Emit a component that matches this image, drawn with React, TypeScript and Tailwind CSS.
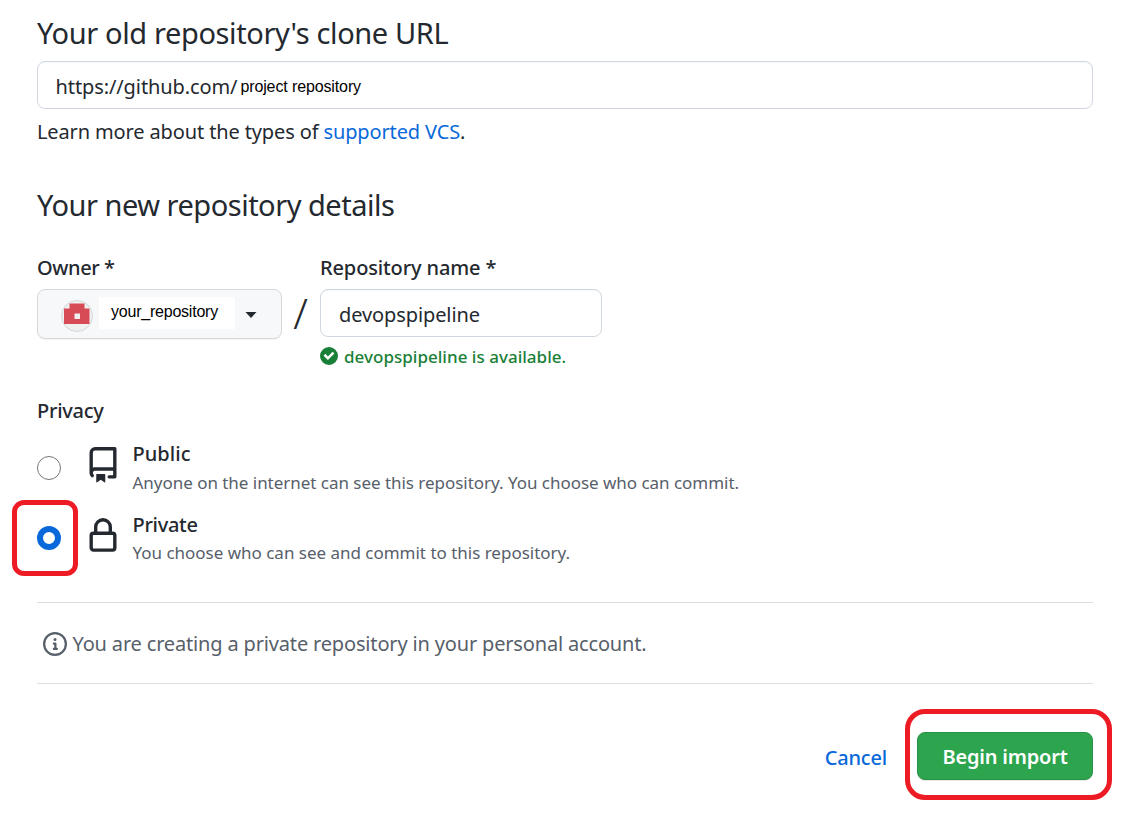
import type { ReactNode } from "react";

function RepoIcon() {
  return (
    <svg viewBox="0 0 16 16" className="block h-9 w-9" fill="#24292f">
      <path fillRule="evenodd" d="M2 2.5A2.5 2.5 0 014.5 0h8.75a.75.75 0 01.75.75v12.5a.75.75 0 01-.75.75h-2.5a.75.75 0 110-1.5h1.75v-2h-8a1 1 0 00-.714 1.7.75.75 0 01-1.072 1.05A2.495 2.495 0 012 11.5v-9zm10.5-1V9h-8c-.356 0-.694.074-1 .208V2.5a1 1 0 011-1h8zM5 12.25v3.25a.25.25 0 00.4.2l1.45-1.087a.25.25 0 01.3 0L8.6 15.7a.25.25 0 00.4-.2v-3.25a.25.25 0 00-.25-.25h-3.5a.25.25 0 00-.25.25z" />
    </svg>
  );
}

function LockIcon() {
  return (
    <svg viewBox="0 0 16 16" className="block h-9 w-9" fill="#24292f">
      <path fillRule="evenodd" d="M4 4v2h-.25A1.75 1.75 0 002 7.75v5.5c0 .966.784 1.75 1.75 1.75h8.5A1.75 1.75 0 0014 13.25v-5.5A1.75 1.75 0 0012.25 6H12V4a4 4 0 10-8 0zm6.5 2V4a2.5 2.5 0 10-5 0v2h5zM12 7.5h.25a.25.25 0 01.25.25v5.5a.25.25 0 01-.25.25h-8.5a.25.25 0 01-.25-.25v-5.5a.25.25 0 01.25-.25H12z" />
    </svg>
  );
}

function Option({
  title,
  titleClass,
  text,
  textClass,
  icon,
  radio,
  className,
}: {
  title: string;
  titleClass: string;
  text: string;
  textClass: string;
  icon: ReactNode;
  radio: ReactNode;
  className: string;
}) {
  return (
    <div className={"flex items-start " + className}>
      {radio}
      {icon}
      <div className="ml-[11.5px] whitespace-nowrap">
        <div className={"h-7 text-[20px] leading-[30px] font-medium " + titleClass}>{title}</div>
        <div className={"h-6 text-[17px] leading-[26px] text-[#57606a] " + textClass}>{text}</div>
      </div>
    </div>
  );
}

export default function App() {
  return (
    <div className="h-[821px] w-[1129px] overflow-hidden bg-white pt-[13px] pr-9 pl-[37px] font-['Noto_Sans',sans-serif] text-[20px] text-[#24292f]">
      <h2 className="h-10 text-[29px] leading-10 tracking-[-0.38px]">Your old repository's clone URL</h2>
      <div className="mt-2 flex h-12 items-center rounded-lg border border-[#d0d7de] pl-[17.5px] shadow-[inset_0_1px_0_rgba(208,215,222,0.2)]">
        <span className="pt-1 leading-7 tracking-[-0.1px]">https://github.com/</span>
        <span className="ml-[3px] pt-[3px] font-['Liberation_Sans',sans-serif] text-[16px] leading-6 tracking-[-0.12px] text-black">
          project repository
        </span>
      </div>
      <p className="mt-[7px] h-[30px] leading-8 tracking-[-0.13px]">
        Learn more about the types of <a className="text-[#0969da]">supported VCS</a>.
      </p>

      <h2 className="mt-[39px] h-10 text-[29px] leading-10 tracking-[-0.49px]">Your new repository details</h2>
      <div className="mt-7 flex h-[115px]">
        <div className="w-[245px]">
          <div className="h-7 leading-[30px] font-medium tracking-[-0.4px]">Owner *</div>
          <button className="mt-2 flex h-[50px] w-full items-start rounded-lg border border-[#d5d8da] bg-[#f6f8fa] pl-[23px] shadow-[0_1px_0_rgba(27,31,36,0.04)]">
            <svg viewBox="0 0 32 32" className="mt-[10px] block h-8 w-8">
              <circle cx="16" cy="16" r="15.5" fill="#f0f0f0" stroke="#d5d8da" />
              <path fillRule="evenodd" fill="#d64b56" d="M8.5 3.5h15v5h5V24H3V8.5h5.500zM13.5 13.5V19H19v-5.500z" />
            </svg>
            <span className="mt-[7px] ml-[6px] h-8 w-[136px] bg-white pl-3 text-left font-['Liberation_Sans',sans-serif] text-[16px] leading-[30px] tracking-[-0.218px] text-black">
              your_repository
            </span>
            <svg viewBox="0 0 12 6" className="mt-[22px] ml-[10px] block h-[6px] w-3">
              <path fill="#24292f" d="M.5 0h11L6 6z" />
            </svg>
          </button>
        </div>
        <div className="flex w-[37px] justify-center pt-[37px] text-[42px] leading-[46px] font-light">/</div>
        <div className="ml-px w-[282px]">
          <div className="h-7 leading-[30px] font-medium tracking-[-0.13px]">Repository name *</div>
          <div className="mt-2 flex h-12 items-center rounded-lg border border-[#d0d7de] pl-[18px] shadow-[inset_0_1px_0_rgba(208,215,222,0.2)]">
            <span className="pt-1 leading-7 tracking-[-0.1px]">devopspipeline</span>
          </div>
          <div className="mt-[7px] flex h-6 items-center text-[17px] font-medium tracking-[0.02px] text-[#1a7f37]">
            <svg viewBox="0 0 12 12" className="mr-[6px] block h-[18px] w-[18px]" fill="#1a7f37">
              <path fillRule="evenodd" d="M6 0a6 6 0 100 12A6 6 0 006 0zm-.705 8.737L9.63 4.403 8.392 3.166 5.295 6.263l-1.7-1.702L2.356 5.8l2.938 2.938z" />
            </svg>
            <span className="pt-[2px] leading-6">devopspipeline is available.</span>
          </div>
        </div>
      </div>

      <div className="mt-[28px] h-7 leading-[30px] font-medium tracking-[-0.25px]">Privacy</div>
      <Option
        className="mt-[15px] h-[61px]"
        title="Public"
        titleClass="tracking-[0.05px]"
        text="Anyone on the internet can see this repository. You choose who can commit."
        textClass="mt-[3px] tracking-[-0.03px]"
        radio={<span className="mt-[17px] h-6 w-6 rounded-full border border-[#767676]" />}
        icon={<span className="mt-2 ml-6"><RepoIcon /></span>}
      />
      <div className="-ml-[25px] flex">
        <div className="mr-[-41px] h-[76px] w-[66px] shrink-0 rounded-[12px] border-[5px] border-[#ed1c24]" />
        <Option
          className="mt-[10px]"
          title="Private"
          titleClass="tracking-[-0.3px]"
          text="You choose who can see and commit to this repository."
          textClass="mt-[2px] tracking-[-0.015px]"
          radio={<span className="mt-4 h-6 w-6 rounded-full border-[6px] border-[#0969da]" />}
          icon={<span className="mt-2 ml-6"><LockIcon /></span>}
        />
      </div>

      <div className="mt-[26px] flex h-[82px] items-center border-y border-[#d8dee4] pl-[6px] text-[#57606a]">
        <svg viewBox="0 0 16 16" className="mt-[2px] mr-[5.5px] block h-6 w-6" fill="#57606a">
          <path fillRule="evenodd" d="M8 1.5a6.5 6.5 0 100 13 6.5 6.5 0 000-13zM0 8a8 8 0 1116 0A8 8 0 010 8zm6.5-.25A.75.75 0 017.25 7h1a.75.75 0 01.75.75v2.75h.25a.75.75 0 010 1.5h-2a.75.75 0 010-1.5h.25v-2h-.25a.75.75 0 01-.75-.75zM8 6a1 1 0 100-2 1 1 0 000 2z" />
        </svg>
        <span className="pt-[2px] tracking-[-0.164px]">You are creating a private repository in your personal account.</span>
      </div>

      <div className="-mr-[19px] mt-[25px] flex items-center justify-end">
        <a className="mr-[18px] pt-[7px] font-medium tracking-[-0.18px] text-[#0969da]">Cancel</a>
        <div className="flex h-[91px] w-[207px] items-start rounded-[20px] border-[5px] border-[#ed1c24] pt-[18px] pl-[7px]">
          <button className="h-12 w-[176px] rounded-lg border border-[#2a9147] bg-[#2da44e] pt-[2px] font-semibold tracking-[-0.2px] text-white shadow-[0_1px_0_rgba(27,31,36,0.1)]">
            Begin import
          </button>
        </div>
      </div>
    </div>
  );
}
